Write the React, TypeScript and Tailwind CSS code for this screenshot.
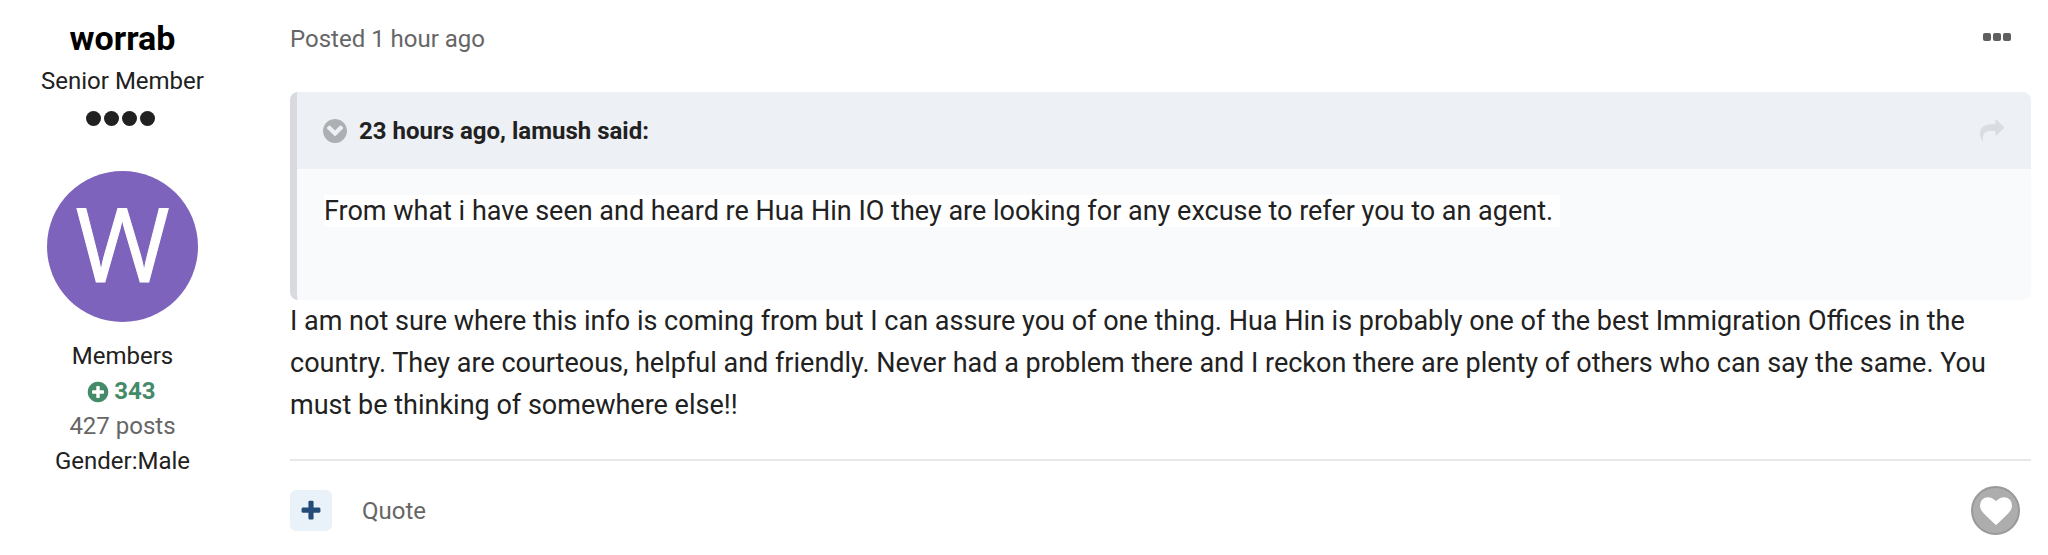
import type { ReactNode } from "react";

function Icon({ d, className }: { d: string; className: string }) {
  return (
    <svg viewBox="0 0 1792 1792" fill="currentColor" aria-hidden="true" className={className}>
      <path d={d} />
    </svg>
  );
}

const ICONS = {
  plus: "M1600 736v192q0 40-28 68t-68 28h-416v416q0 40-28 68t-68 28h-192q-40 0-68-28t-28-68v-416h-416q-40 0-68-28t-28-68v-192q0-40 28-68t68-28h416v-416q0-40 28-68t68-28h192q40 0 68 28t28 68v416h416q40 0 68 28t28 68z",
  plusCircle:
    "M1344 960v-128q0-26-19-45t-45-19h-256v-256q0-26-19-45t-45-19h-128q-26 0-45 19t-19 45v256h-256q-26 0-45 19t-19 45v128q0 26 19 45t45 19h256v256q0 26 19 45t45 19h128q26 0 45-19t19-45v-256h256q26 0 45-19t19-45zm320-64q0 209-103 385.5t-279.5 279.5-385.5 103-385.5-103-279.5-279.5-103-385.5 103-385.5 279.5-279.5 385.5-103 385.5 103 279.5 279.5 103 385.5z",
  chevronCircle:
    "M941 1203l454-454q19-19 19-45t-19-45l-102-102q-19-19-45-19t-45 19l-307 307-307-307q-19-19-45-19t-45 19l-102 102q-19 19-19 45t19 45l454 454q19 19 45 19t45-19zm723-307q0 209-103 385.5t-279.5 279.5-385.5 103-385.5-103-279.5-279.5-103-385.5 103-385.5 279.5-279.5 385.5-103 385.5 103 279.5 279.5 103 385.5z",
  share:
    "M1792 640q0 26-19 45l-512 512q-19 19-45 19t-45-19-19-45v-256h-224q-98 0-175.5 6t-154 21.5-133 42.5-105.5 69.5-80 101-48.5 138.5-17.5 181q0 55 5 123 0 6 2.5 23.5t2.5 26.5q0 15-8.5 25t-23.5 10q-16 0-28-17-7-9-13-22t-13.5-30-10.5-24q-127-285-127-451 0-199 53-333 162-403 875-403h224v-256q0-26 19-45t45-19 45 19l512 512q19 19 19 45z",
  heart:
    "M896 1664q-26 0-44-18l-624-602q-10-8-27.500-26t-55.500-65.500-68-97.500-53.500-121-23.500-138q0-220 127-344t351-124q62 0 126.500 21.500t120 58 95.500 68.500 76 68q36-36 76-68t95.500-68.500 120-58 126.500-21.500q224 0 351 124t127 344q0 221-229 450l-623 600q-18 18-44 18z",
};

function Author() {
  return (
    <aside className="flex w-[245px] shrink-0 flex-col items-center pt-[19px] text-2xl leading-[35px] text-[#212121]">
      <h3 className="text-[34px] leading-[38px] font-bold text-black">
        <a href="#worrab">worrab</a>
      </h3>
      <p className="mt-[7px]">Senior Member</p>
      <div className="mt-3 mr-1 flex gap-[3px]" role="img" aria-label="Rank 4">
        {[1, 2, 3, 4].map((n) => (
          <span key={n} className="size-[15px] rounded-full bg-[#212121]" />
        ))}
      </div>
      <a
        href="#worrab"
        className="mt-[45px] flex size-[151px] items-center justify-center rounded-full bg-[#7e63bc] pb-2 font-['Open_Sans',sans-serif] text-[102px] leading-none text-white [-webkit-text-stroke:1px_white]"
      >
        W
      </a>
      <ul className="mt-[17px] flex flex-col items-center">
        <li>Members</li>
        <li className="mr-[3px] flex items-center gap-1 font-bold text-[#458b69]">
          <Icon d={ICONS.plusCircle} className="size-6" />
          343
        </li>
        <li className="text-[#666666]">427 posts</li>
        <li>Gender:Male</li>
      </ul>
    </aside>
  );
}

function Quote({ title, children }: { title: string; children: ReactNode }) {
  return (
    <blockquote className="overflow-hidden rounded-lg border-l-[7px] border-[#d8dae0] bg-[#f9fafc]">
      <div className="flex h-[77px] items-center bg-[#edf0f5] pr-[27px] pl-6 text-2xl font-bold">
        <button type="button" aria-label="Toggle quote" className="text-[#adb0b3]">
          <Icon d={ICONS.chevronCircle} className="size-7" />
        </button>
        <span className="ml-[10px] flex-1">{title}</span>
        <a href="#original" aria-label="Go to quoted post" className="text-[#d9dce0]">
          <Icon d={ICONS.share} className="size-6" />
        </a>
      </div>
      <div className="px-[27px] pt-[21px] pb-[68px]">
        <p>
          <span className="bg-white">{children}&nbsp;</span>
        </p>
      </div>
    </blockquote>
  );
}

export default function App() {
  return (
    <article className="flex bg-white font-['Roboto',sans-serif]">
      <Author />
      <div className="min-w-0 flex-1 pr-[17px] pl-[45px]">
        <header className="flex h-[92px] items-start justify-between pt-5 text-2xl leading-[38px] text-[#666666]">
          <a href="#post">Posted 1 hour ago</a>
          <button type="button" aria-label="More options" className="mt-[13px] mr-5 flex gap-[2px]">
            <span className="size-2 rounded-[2px] bg-[#5f5f5f]" />
            <span className="size-2 rounded-[2px] bg-[#5f5f5f]" />
            <span className="size-2 rounded-[2px] bg-[#5f5f5f]" />
          </button>
        </header>
        <div className="text-[27px] leading-[42px] text-[#212121]">
          <Quote title="23 hours ago, lamush said:">
            From what i have seen and heard re Hua Hin IO they are looking for any excuse to refer you to an agent.
          </Quote>
          <p>
            I am not sure where this info is coming from but I can assure you of one thing. Hua Hin is probably one of
            the best Immigration Offices in the country. They are courteous, helpful and friendly. Never had a problem
            there and I reckon there are plenty of others who can say the same. You must be thinking of somewhere
            else!!
          </p>
        </div>
        <footer className="mt-[33px] flex items-center border-t-2 border-[#e8e8e8] pt-[25px] text-2xl text-[#666666]">
          <button
            type="button"
            aria-label="Multi-quote"
            className="flex h-[41px] w-[42px] items-center justify-center rounded-md bg-[#e9f1f9] text-[#254b78]"
          >
            <Icon d={ICONS.plus} className="size-6" />
          </button>
          <button type="button" className="ml-[30px]">
            Quote
          </button>
          <button
            type="button"
            aria-label="Like"
            className="mr-[11px] ml-auto flex size-[49px] items-center justify-center rounded-full border-2 border-[#999999] bg-[#adadad] text-white"
          >
            <Icon d={ICONS.heart} className="size-8" />
          </button>
        </footer>
      </div>
    </article>
  );
}
